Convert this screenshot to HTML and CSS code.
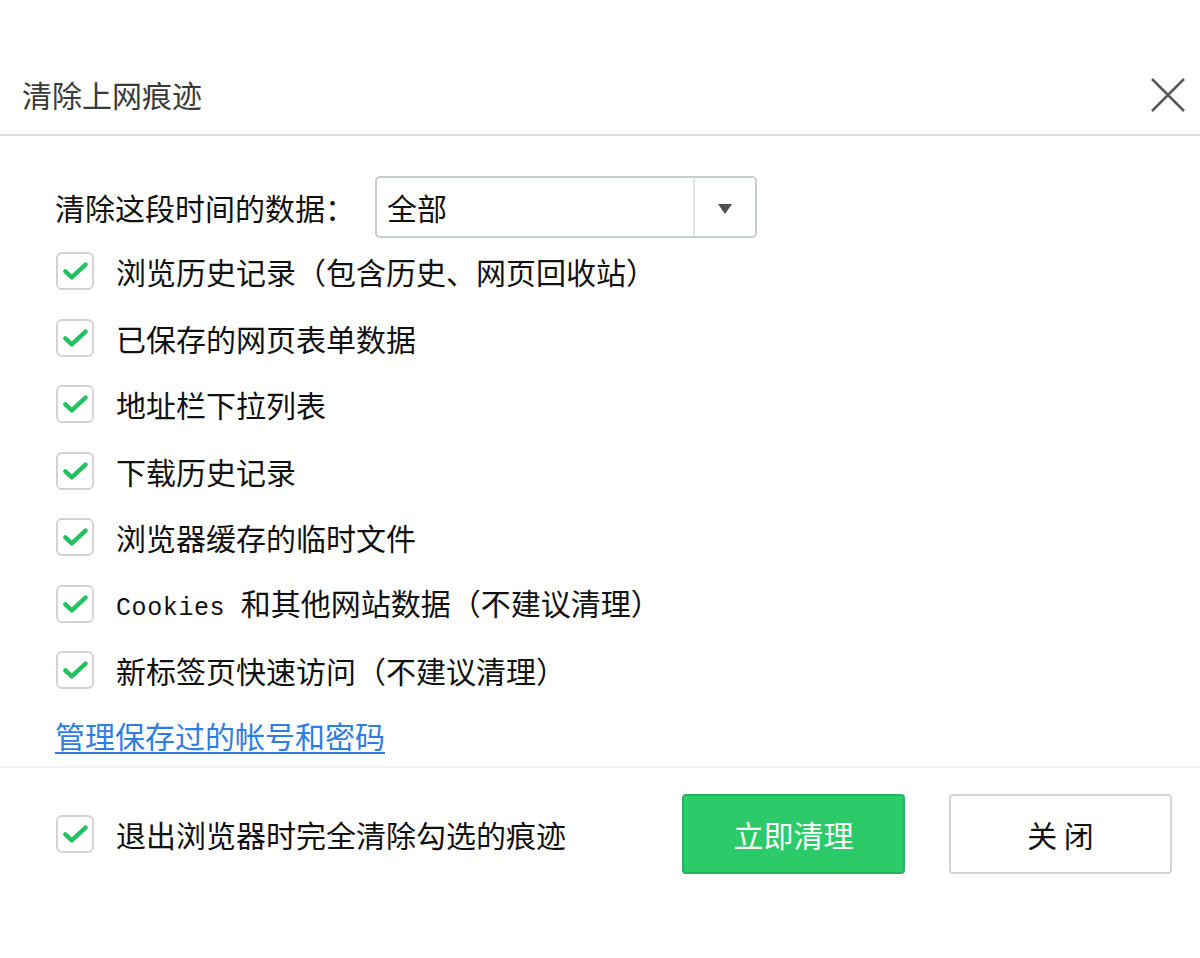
FILE: index.html
```html
<!DOCTYPE html>
<html lang="zh-CN">
<head>
<meta charset="utf-8">
<title>清除上网痕迹</title>
<link rel="stylesheet" href="styles.css">
</head>
<body>
<div class="dialog">
  <header class="header">
    <div class="title">清除上网痕迹</div>
    <button class="close-x" aria-label="关闭">
      <svg width="36" height="36" viewBox="0 0 36 36"><path d="M2 2 L34 34 M34 2 L2 34" stroke="#5a5a5a" stroke-width="2.6" fill="none"/></svg>
    </button>
  </header>
  <main class="body">
    <div class="range-row">
      <span class="range-label">清除这段时间的数据：</span>
      <div class="select">
        <span class="select-value">全部</span>
        <span class="select-arrow"><svg width="16" height="12" viewBox="0 0 16 12"><path d="M1 1 H15 L8 11 Z" fill="#505050"/></svg></span>
      </div>
    </div>
    <ul class="options">
      <li class="option"><span class="cb"><svg viewBox="0 0 37 37"><path d="M8 19 L15 25.5 L30 11.5" stroke="#23c15f" stroke-width="4.8" fill="none" stroke-linecap="round" stroke-linejoin="round"/></svg></span><span class="opt-text">浏览历史记录（包含历史、网页回收站）</span></li>
      <li class="option"><span class="cb"><svg viewBox="0 0 37 37"><path d="M8 19 L15 25.5 L30 11.5" stroke="#23c15f" stroke-width="4.8" fill="none" stroke-linecap="round" stroke-linejoin="round"/></svg></span><span class="opt-text">已保存的网页表单数据</span></li>
      <li class="option"><span class="cb"><svg viewBox="0 0 37 37"><path d="M8 19 L15 25.5 L30 11.5" stroke="#23c15f" stroke-width="4.8" fill="none" stroke-linecap="round" stroke-linejoin="round"/></svg></span><span class="opt-text">地址栏下拉列表</span></li>
      <li class="option"><span class="cb"><svg viewBox="0 0 37 37"><path d="M8 19 L15 25.5 L30 11.5" stroke="#23c15f" stroke-width="4.8" fill="none" stroke-linecap="round" stroke-linejoin="round"/></svg></span><span class="opt-text">下载历史记录</span></li>
      <li class="option"><span class="cb"><svg viewBox="0 0 37 37"><path d="M8 19 L15 25.5 L30 11.5" stroke="#23c15f" stroke-width="4.8" fill="none" stroke-linecap="round" stroke-linejoin="round"/></svg></span><span class="opt-text">浏览器缓存的临时文件</span></li>
      <li class="option"><span class="cb"><svg viewBox="0 0 37 37"><path d="M8 19 L15 25.5 L30 11.5" stroke="#23c15f" stroke-width="4.8" fill="none" stroke-linecap="round" stroke-linejoin="round"/></svg></span><span class="opt-text"><span class="mono">Cookies </span>和其他网站数据（不建议清理）</span></li>
      <li class="option"><span class="cb"><svg viewBox="0 0 37 37"><path d="M8 19 L15 25.5 L30 11.5" stroke="#23c15f" stroke-width="4.8" fill="none" stroke-linecap="round" stroke-linejoin="round"/></svg></span><span class="opt-text">新标签页快速访问（不建议清理）</span></li>
    </ul>
    <div class="link-row"><a class="link" href="#">管理保存过的帐号和密码</a></div>
  </main>
  <footer class="footer">
    <div class="option exit-opt"><span class="cb"><svg viewBox="0 0 37 37"><path d="M8 19 L15 25.5 L30 11.5" stroke="#23c15f" stroke-width="4.8" fill="none" stroke-linecap="round" stroke-linejoin="round"/></svg></span><span class="opt-text">退出浏览器时完全清除勾选的痕迹</span></div>
    <div class="buttons">
      <button class="btn btn-primary">立即清理</button>
      <button class="btn btn-default">关 闭</button>
    </div>
  </footer>
</div>
</body>
</html>
```
FILE: styles.css
```css
* { box-sizing: border-box; }
html, body {
  margin: 0;
  padding: 0;
  background: #ffffff;
}
body {
  font-family: "Noto Sans CJK SC", "Noto Sans", sans-serif;
  color: #111;
  font-size: 30px;
  text-spacing-trim: space-all;
}
.dialog {
  width: 1200px;
  height: 958px;
  background: #fff;
}
.header {
  height: 136px;
  padding: 54px 14px 0 22px;
  display: flex;
  align-items: center;
  justify-content: space-between;
  border-bottom: 2px solid #dedede;
}
.title {
  font-size: 30px;
  color: #3a3a3a;
  line-height: 1;
}
.close-x {
  border: 0;
  background: transparent;
  padding: 0;
  width: 36px;
  height: 36px;
  margin-top: 2px;
  display: flex;
}
.body {
  padding: 40px 0 0 55px;
}
.range-row {
  display: flex;
  align-items: center;
  height: 62px;
}
.range-label {
  width: 320px;
  line-height: 1;
}
.select {
  width: 382px;
  height: 62px;
  border: 2px solid #c9ccd3;
  border-radius: 5px;
  display: flex;
  align-items: center;
}
.select-value {
  flex: 1;
  padding-left: 10px;
  line-height: 1;
}
.select-arrow {
  width: 62px;
  height: 100%;
  border-left: 2px solid #e2e4e8;
  display: flex;
  align-items: center;
  justify-content: center;
  padding-top: 4px;
}
.options {
  list-style: none;
  margin: 0;
  padding: 0;
}
.option {
  display: flex;
  align-items: center;
  height: 66.5px;
}
.cb {
  width: 38px;
  height: 38px;
  margin-left: 1px;
  border: 2px solid #d3d3d3;
  border-radius: 6px;
  background: #fff;
  display: flex;
  flex-shrink: 0;
}
.cb svg {
  width: 100%;
  height: 100%;
}
.opt-text {
  margin-left: 22px;
  line-height: 1;
  white-space: nowrap;
}
.mono {
  font-family: "Liberation Mono", "DejaVu Sans Mono", monospace;
  font-size: 25px;
  letter-spacing: 0.6px;
  white-space: pre;
}
.link-row {
  height: 62px;
  display: flex;
  align-items: center;
}
.link {
  color: #2f7de0;
  text-decoration: underline;
  text-underline-offset: 4px;
  text-decoration-thickness: 2px;
  line-height: 1;
}
.footer {
  border-top: 2px solid #f0f0f0;
  padding: 26px 28px 0 55px;
  display: flex;
  align-items: center;
  justify-content: space-between;
}
.exit-opt {
  height: 80px;
}
.buttons {
  display: flex;
  gap: 44px;
}
.btn {
  width: 223px;
  height: 80px;
  font-family: "Noto Sans CJK SC", "Noto Sans", sans-serif;
  font-size: 30px;
  border-radius: 4px;
  padding: 0;
  line-height: 1;
}
.btn-primary {
  background: #2dca6a;
  border: 2px solid #27b35d;
  color: #fff;
}
.btn-default {
  background: #fff;
  border: 2px solid #d4d4d4;
  color: #111;
}
```
